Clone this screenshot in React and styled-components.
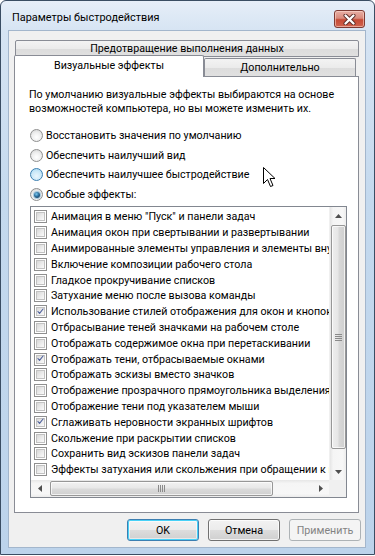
import React from "react";
import styled, { createGlobalStyle } from "styled-components";

const FONT = `Roboto, "Noto Sans", "Liberation Sans", sans-serif`;

const GlobalStyle = createGlobalStyle`
  html, body { margin: 0; padding: 0; background: #ffffff; }
  body { font-family: ${FONT}; font-size: 10.7px; color: #000; }
  * { box-sizing: border-box; }
`;

const Window = styled.div`
  position: relative;
  width: 375px;
  height: 555px;
  border: 1px solid #3a4d63;
  border-radius: 6px 6px 0 0;
  background: linear-gradient(180deg, #e6eef8 0px, #d6e4f3 30px, #c4d9ee 200px, #bcd3eb 100%);
  display: flex;
  flex-direction: column;
  padding: 0 8px 6px 7px;
  overflow: hidden;
`;

const TitleBar = styled.div`
  height: 29px;
  flex: none;
  display: flex;
  justify-content: space-between;
  align-items: flex-start;
  padding-left: 4px;
`;

const Title = styled.div`
  font-size: 10.9px;
  line-height: 15px;
  margin-top: 9px;
  color: #000;
`;

const CloseButton = styled.div`
  width: 31px;
  height: 18px;
  margin-top: 9px;
  margin-right: 1px;
  border: 1px solid #7d3a33;
  border-radius: 3px;
  background: linear-gradient(180deg, #e8afa5 0%, #d98a7c 45%, #c64a35 55%, #d0634e 100%);
  box-shadow: inset 0 0 0 1px rgba(255, 220, 210, 0.55);
  display: flex;
  align-items: center;
  justify-content: center;
`;

const Client = styled.div`
  flex: 1;
  display: flex;
  flex-direction: column;
  background: #f0f0f0;
  border: 1px solid #a3b6cc;
  padding: 9px 6px 0 5px;
`;

const TabRowBack = styled.div`
  display: flex;
  height: 17px;
  padding-left: 1px;
`;

const TabRowFront = styled.div`
  display: flex;
  align-items: flex-end;
  height: 19px;
`;

const Tab = styled.div`
  position: relative;
  z-index: ${(p) => (p.$active ? 2 : 0)};
  flex: ${(p) => (p.$grow ? 1 : "none")};
  width: ${(p) => (p.$width ? `${p.$width}px` : "auto")};
  height: ${(p) => (p.$active ? "22px" : p.$back ? "17px" : "18px")};
  margin-bottom: ${(p) => (p.$active ? "-1px" : "0")};
  border: 1px solid #898c95;
  border-bottom: ${(p) => (p.$back ? "1px solid #898c95" : "none")};
  border-radius: 2px 2px 0 0;
  background: ${(p) =>
    p.$active ? "#ffffff" : "linear-gradient(180deg, #f3f3f3 0%, #ebebeb 50%, #dcdcdc 51%, #e0e0e0 100%)"};
  display: flex;
  justify-content: center;
  align-items: ${(p) => (p.$active ? "flex-start" : "center")};
  padding-top: ${(p) => (p.$active ? "3px" : "0")};
  font-size: 10.7px;
  line-height: 14px;
  white-space: nowrap;
`;

const Panel = styled.div`
  position: relative;
  z-index: 1;
  height: 437px;
  flex: none;
  background: #ffffff;
  border: 1px solid #898c95;
  padding: 11px 10px 0 14px;
  display: flex;
  flex-direction: column;
`;

const Description = styled.p`
  margin: 0;
  line-height: 13.5px;
  white-space: nowrap;
`;

const RadioGroup = styled.div`
  margin-top: 11px;
  display: flex;
  flex-direction: column;
`;

const RadioRow = styled.label`
  height: 19.6px;
  display: flex;
  align-items: center;
  gap: 3px;
  white-space: nowrap;
`;

const RadioCircle = styled.span`
  flex: none;
  width: 13px;
  height: 13px;
  margin-left: 1px;
  border-radius: 50%;
  border: 1px solid ${(p) => (p.$hover ? "#3c7fb1" : "#8f9090")};
  background: ${(p) =>
    p.$hover
      ? "radial-gradient(circle at 50% 65%, #eaf6fd 0, #c9e8f8 55%, #9ed3f0 100%)"
      : "radial-gradient(circle at 50% 65%, #ffffff 0, #eeeeee 50%, #cfcfcf 100%)"};
  display: flex;
  align-items: center;
  justify-content: center;
`;

const RadioDot = styled.span`
  width: 6px;
  height: 6px;
  border-radius: 50%;
  background: radial-gradient(circle at 40% 35%, #7fcaf0 0, #2a6f9e 45%, #0e2844 100%);
  box-shadow: 0 0 0 1px #a9c9de;
`;

const ListBox = styled.div`
  margin: 2px 0 0 1px;
  width: 317px;
  height: 292px;
  flex: none;
  border: 1px solid #828790;
  background: #ffffff;
  display: grid;
  grid-template-columns: 1fr 17px;
  grid-template-rows: 1fr 17px;
  overflow: hidden;
`;

const ListItems = styled.div`
  overflow: hidden;
  padding: 1.6px 0 0 3px;
`;

const ItemRow = styled.div`
  height: 15.8px;
  display: flex;
  align-items: center;
  gap: 4px;
  white-space: nowrap;
`;

const CheckBox = styled.span`
  flex: none;
  width: 13px;
  height: 13px;
  border: 1px solid #8f8f8f;
  background: #f4f4f4;
  display: flex;
  align-items: center;
  justify-content: center;
  box-shadow: inset 0 0 0 1px #ffffff;
`;

const CheckInner = styled.span`
  width: 9px;
  height: 9px;
  border: 1px solid #c2c2c2;
  background: linear-gradient(135deg, #d8d8d8 0%, #ececec 55%, #fafafa 100%);
  display: flex;
  align-items: center;
  justify-content: center;
  overflow: visible;
`;

const VScroll = styled.div`
  display: flex;
  flex-direction: column;
  background: linear-gradient(90deg, #e6e6e6 0%, #f5f5f5 20%, #f7f7f7 80%, #ececec 100%);
  border-left: 1px solid #f0f0f0;
`;

const HScroll = styled.div`
  display: flex;
  background: linear-gradient(180deg, #e6e6e6 0%, #f5f5f5 20%, #f7f7f7 80%, #ececec 100%);
`;

const Corner = styled.div`
  background: #f0f0f0;
`;

const ArrowBtn = styled.div`
  flex: none;
  width: 17px;
  height: 17px;
  display: flex;
  align-items: center;
  justify-content: center;
`;

const Track = styled.div`
  flex: 1;
  display: flex;
  flex-direction: ${(p) => (p.$vertical ? "column" : "row")};
`;

const Thumb = styled.div`
  flex: none;
  ${(p) =>
    p.$vertical
      ? `width: 15px; height: 224px; margin: 1px 0 0 1px;
         background: linear-gradient(90deg, #eeeeee 0%, #e6e6e6 45%, #d8d8d8 55%, #cfcfcf 100%);`
      : `height: 15px; width: 223px; margin: 1px 0 0 2px;
         background: linear-gradient(180deg, #f2f2f2 0%, #e8e8e8 45%, #dadada 55%, #d0d0d0 100%);`}
  border: 1px solid #979797;
  border-radius: 2px;
  box-shadow: inset 0 0 0 1px rgba(255, 255, 255, 0.7);
  display: flex;
  align-items: center;
  justify-content: center;
`;

const ButtonRow = styled.div`
  display: flex;
  justify-content: flex-end;
  gap: 9px;
  margin: 6px -2px 0 0;
`;

const Button = styled.div`
  width: 72px;
  height: 22px;
  border: 1px solid ${(p) => (p.$disabled ? "#adb2b5" : p.$default ? "#3c7fb1" : "#707070")};
  border-radius: 3px;
  background: ${(p) =>
    p.$disabled
      ? "#f4f4f4"
      : "linear-gradient(180deg, #f2f2f2 0%, #ebebeb 50%, #dddddd 51%, #cfcfcf 100%)"};
  box-shadow: ${(p) =>
    p.$default
      ? "inset 0 0 0 1px #48d1f7, inset 0 0 0 2px rgba(255,255,255,0.5)"
      : p.$disabled
      ? "none"
      : "inset 0 0 0 1px rgba(255,255,255,0.75)"};
  color: ${(p) => (p.$disabled ? "#838383" : "#000")};
  display: flex;
  align-items: center;
  justify-content: center;
  font-size: 10.7px;
`;

const Cursor = styled.svg`
  position: absolute;
  left: 262px;
  top: 166px;
  z-index: 10;
`;

const items = [
  ["Анимация в меню \"Пуск\" и панели задач", false],
  ["Анимация окон при свертывании и развертывании", false],
  ["Анимированные элементы управления и элементы внутри окна", false],
  ["Включение композиции рабочего стола", false],
  ["Гладкое прокручивание списков", false],
  ["Затухание меню после вызова команды", false],
  ["Использование стилей отображения для окон и кнопок", true],
  ["Отбрасывание теней значками на рабочем столе", false],
  ["Отображать содержимое окна при перетаскивании", false],
  ["Отображать тени, отбрасываемые окнами", true],
  ["Отображать эскизы вместо значков", false],
  ["Отображение прозрачного прямоугольника выделения", false],
  ["Отображение тени под указателем мыши", false],
  ["Сглаживать неровности экранных шрифтов", true],
  ["Скольжение при раскрытии списков", false],
  ["Сохранить вид эскизов панели задач", false],
  ["Эффекты затухания или скольжения при обращении к подсказкам", false],
];

const radios = [
  ["Восстановить значения по умолчанию", false, false],
  ["Обеспечить наилучший вид", false, false],
  ["Обеспечить наилучшее быстродействие", false, true],
  ["Особые эффекты:", true, false],
];

const Tri = ({ dir }) => {
  const pts = {
    up: "0,4 3.5,0 7,4",
    down: "0,0 7,0 3.5,4",
    left: "4,0 4,7 0,3.5",
    right: "0,0 0,7 4,3.5",
  }[dir];
  const vertical = dir === "up" || dir === "down";
  return (
    <svg width={vertical ? 7 : 4} height={vertical ? 4 : 7} viewBox={vertical ? "0 0 7 4" : "0 0 4 7"}>
      <polygon points={pts} fill="#4f4f4f" />
    </svg>
  );
};

const Check = () => (
  <svg width="11" height="11" viewBox="0 0 11 11" style={{ marginTop: -1 }}>
    <path d="M1.5 5.5 L4 8.5 L9.5 1.5" fill="none" stroke="#4a5d9a" strokeWidth="1.6" strokeLinecap="round" strokeLinejoin="round" />
  </svg>
);

export default function App() {
  return (
    <>
      <GlobalStyle />
      <Window>
        <TitleBar>
          <Title>Параметры быстродействия</Title>
          <CloseButton>
            <svg width="13" height="11" viewBox="0 0 13 11">
              <path d="M2.5 1.5 L10.5 9.5 M10.5 1.5 L2.5 9.5" stroke="#5a2a25" strokeWidth="4" strokeLinecap="round" />
              <path d="M2.5 1.5 L10.5 9.5 M10.5 1.5 L2.5 9.5" stroke="#ffffff" strokeWidth="2.3" strokeLinecap="round" />
            </svg>
          </CloseButton>
        </TitleBar>
        <Client>
          <TabRowBack>
            <Tab $back $grow>Предотвращение выполнения данных</Tab>
          </TabRowBack>
          <TabRowFront>
            <Tab $active $width={190}>Визуальные эффекты</Tab>
            <Tab $width={152}>Дополнительно</Tab>
          </TabRowFront>
          <Panel>
            <Description>
              По умолчанию визуальные эффекты выбираются на основе
              <br />
              возможностей компьютера, но вы можете изменить их.
            </Description>
            <RadioGroup>
              {radios.map(([label, checked, hover]) => (
                <RadioRow key={label}>
                  <RadioCircle $hover={hover}>{checked && <RadioDot />}</RadioCircle>
                  {label}
                </RadioRow>
              ))}
            </RadioGroup>
            <ListBox>
              <ListItems>
                {items.map(([label, checked]) => (
                  <ItemRow key={label}>
                    <CheckBox>
                      <CheckInner>{checked && <Check />}</CheckInner>
                    </CheckBox>
                    {label}
                  </ItemRow>
                ))}
              </ListItems>
              <VScroll>
                <ArrowBtn><Tri dir="up" /></ArrowBtn>
                <Track $vertical>
                  <Thumb $vertical>
                    <svg width="7" height="7" viewBox="0 0 7 7">
                      <path d="M0 0.5 H7 M0 2.5 H7 M0 4.5 H7 M0 6.5 H7" stroke="#8a8a8a" strokeWidth="1" />
                    </svg>
                  </Thumb>
                </Track>
                <ArrowBtn><Tri dir="down" /></ArrowBtn>
              </VScroll>
              <HScroll>
                <ArrowBtn><Tri dir="left" /></ArrowBtn>
                <Track>
                  <Thumb>
                    <svg width="7" height="7" viewBox="0 0 7 7">
                      <path d="M0.5 0 V7 M2.5 0 V7 M4.5 0 V7 M6.5 0 V7" stroke="#8a8a8a" strokeWidth="1" />
                    </svg>
                  </Thumb>
                </Track>
                <ArrowBtn><Tri dir="right" /></ArrowBtn>
              </HScroll>
              <Corner />
            </ListBox>
          </Panel>
          <ButtonRow>
            <Button $default>OK</Button>
            <Button>Отмена</Button>
            <Button $disabled>Применить</Button>
          </ButtonRow>
        </Client>
        <Cursor width="13" height="21" viewBox="0 0 13 21">
          <path d="M0.5 0.5 L0.5 16.5 L4.5 12.5 L7.5 19.5 L10 18.5 L7 11.5 L12 11.5 Z" fill="#ffffff" stroke="#000000" strokeWidth="1" strokeLinejoin="round" />
        </Cursor>
      </Window>
    </>
  );
}
